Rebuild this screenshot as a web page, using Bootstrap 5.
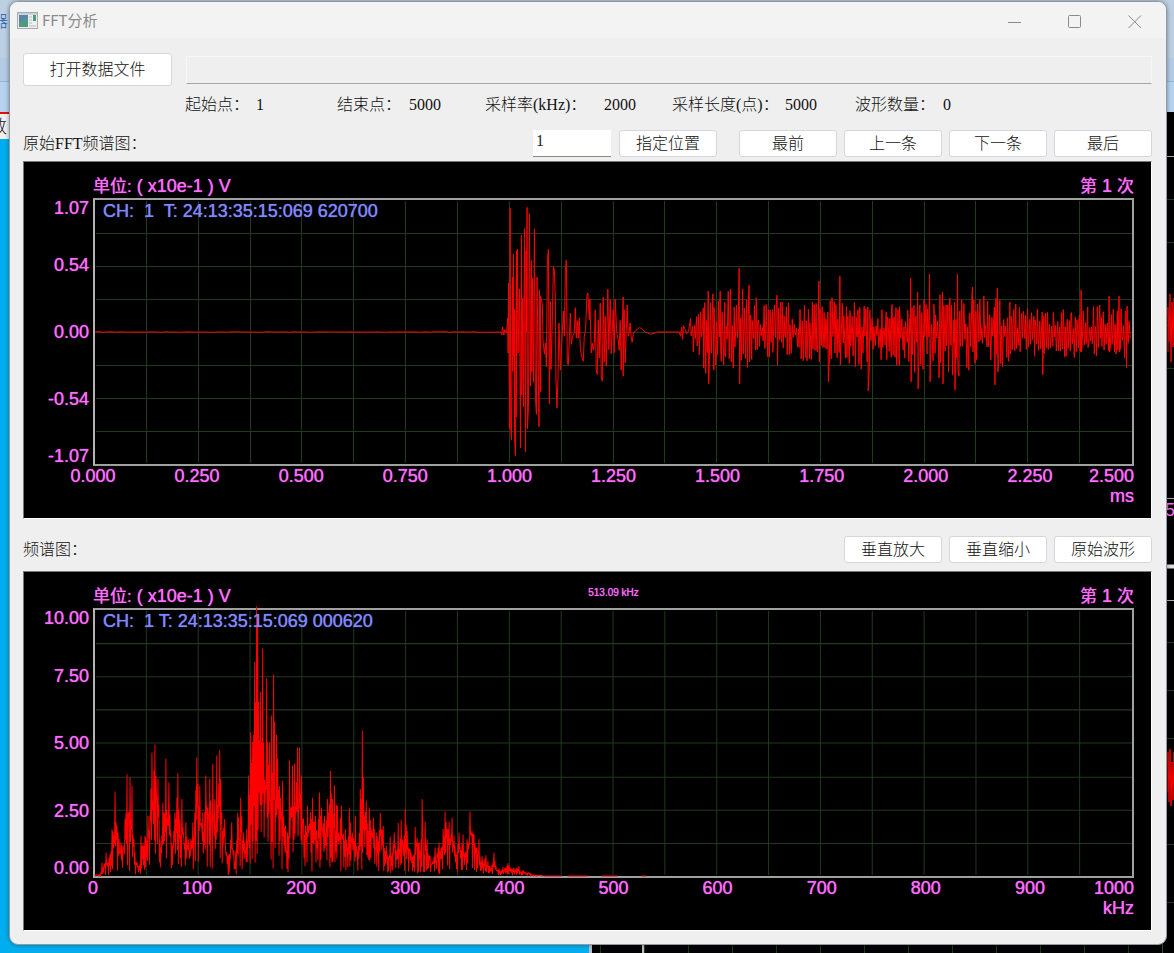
<!DOCTYPE html>
<html lang="zh-CN">
<head>
<meta charset="utf-8">
<meta name="viewport" content="width=device-width, initial-scale=1">
<title>FFT分析</title>
<link rel="stylesheet" href="https://cdn.jsdelivr.net/npm/bootstrap@5.3.0/dist/css/bootstrap.min.css">
<style>
  body { font-family: "Liberation Serif", "Noto Sans CJK SC", serif; font-size: 16px; font-weight: 300; line-height: 24px; color: #111; background: #00aeef; }
  .stage { min-height: 100vh; padding: 1px 7px 8px 9px; }

  /* application behind the dialog */
  .desk { z-index: 0; }
  .desk-sky { height: 112px; background: linear-gradient(#bccfe3 0 58px, #b4cbe6 58px 81px, #8fb6dd 81px 82px, #b5d3ee 82px 100%); }
  .desk-left { flex: 590 1 0; min-width: 0; }
  .desk-right { flex: 584 1 0; min-width: 0; border-left: 3px solid #bbb; background: linear-gradient(#bbb, #bbb) 50px 0 / 2px 100% no-repeat, repeating-linear-gradient(90deg, #000 0 8px, #1f3a1f 8px 9px, #000 9px 44px); }
  .desk-tab { height: 27px; background: #f0f0f0; border-top: 2px solid #e01010; font-size: 18px; line-height: 27px; text-indent: -11px; }
  .desk-name { top: 10px; left: -8px; color: #1f5fa8; }
  .desk-scope { width: 12px; background: #000; border-left: 1px solid #345034; }
  .desk-scope svg { width: 12px; height: 841px; }

  .dialog { z-index: 1; background: #efefef; border: 1px solid #8f9aa5; border-radius: 9px; overflow: hidden; box-shadow: 0 0 4px #0006; }
  .titlebar { height: 36px; background: #f3f3f3; color: #8a8a8a; font-family: "Noto Sans CJK SC", sans-serif; font-size: 15px; font-weight: 400; padding-left: 7px; }
  .win-btn { width: 60px; height: 34px; padding: 0 2px 0 0; border: 0; background: none; color: #8a8a8a; }
  .client { padding: 15px 14px 13px 13px; }

  .tool { flex: none; width: 98px; height: 27px; padding: 0; line-height: 24px; font-size: 16px; font-weight: 300; border: 1px solid #d6d6dc; border-radius: 3px; background: #fff; color: #111; white-space: nowrap; }
  .tool-lg { width: 149px; height: 33px; }
  .path-box { width: auto; height: 28px; margin-left: 14px; border: 1px solid #f7f7f7; border-bottom-color: #a5a5a5; border-radius: 0; background: #efefef; }
  .num-box { width: 78px; height: 27px; padding: 0 3px 5px; border: 0; border-bottom: 1px solid #8c8884; border-radius: 0; background: #fff; font-size: 16px; line-height: 21px; }
  .facts { display: grid; grid-template-columns: 71fr 81fr 72fr 76fr 119fr 68fr 113fr 70fr 88fr 209fr; margin: 7px 0 13px 162px; white-space: nowrap; }
  .facts dt, .facts dd { font-weight: 300; margin: 0; }
  .tools { gap: 7px; }
  .tools-split { margin-left: 22px; }
  .spectrum-bar { margin: 17px 0 8px; }

  .scope { display: grid; grid-template-columns: 69px 1fr; padding: 0 17px 12px 0; background: #000; border: 1px solid #777; border-right-color: #fff; border-bottom-color: #fff; color: #ff6cff; font-family: "Liberation Sans", "Noto Sans CJK SC", sans-serif; font-size: 18px; font-weight: 400; line-height: 20px; text-shadow: 0 0 1px currentColor; }
  .scope-head { grid-column: 2; height: 36px; display: grid; grid-template-columns: 1fr auto 1fr; align-items: end; line-height: 22px; }
  .scope-head .cjk { font-size: 17px; }
  .peak { font-size: 10px; line-height: 30px; }
  .ylab { display: grid; grid-template-rows: 1fr 2fr 2fr 2fr 1fr; align-items: center; justify-items: end; padding-right: 4px; }
  .ylab :first-child { align-self: start; }
  .ylab :last-child { align-self: end; }
  .plot { height: 268px; border: 2px solid #a0a0a0; border-left-color: #b4b4b4; }
  .plot-tall { height: 270px; }
  .plot svg { position: absolute; inset: 0; width: 100%; height: 100%; }
  .chan { position: relative; margin: 0; padding: 1px 0 0 8px; color: #8088ff; white-space: pre; }
  .xlab { grid-column: 2; display: grid; grid-template-columns: 1fr repeat(9, 2fr) 1fr; justify-items: center; }
  .xlab span { width: 0; display: flex; justify-content: center; }
  .xlab span:first-child { justify-self: start; }
  .xlab span:last-child { justify-self: end; justify-content: end; }
  .unit { grid-column: 2; text-align: right; }
</style>
</head>
<body>
<div class="stage position-relative d-flex flex-column">
  <div class="desk position-absolute top-0 start-0 w-100 h-100 overflow-hidden d-flex flex-column" aria-hidden="true">
    <div class="desk-sky"></div>
    <span class="desk-name position-absolute">器</span>
    <div class="flex-grow-1 d-flex">
      <div class="desk-left"><div class="desk-tab">数</div></div>
      <div class="desk-right d-flex justify-content-end">
        <div class="desk-scope">
          <svg viewBox="0 0 12 841">
            <path d="M0 44.500H12M0 386.500H12M0 488.500H12" stroke="#aaa"/>
            <path d="M0 454.500H12" stroke="#ddd" stroke-width="4"/>
            <path d="M0 87.500H12M0 130.500H12M0 213.500H12M0 256.500H12M0 530.500H12M0 578.500H12M0 626.500H12M0 732.500H12M0 790.500H12" stroke="#1f3a1f"/>
            <path d="M5 240V195L6 230L7 182L8 250L9 190L10 235L11 186L12 258M5 680V640L6 690L7 637L8 694L9 650L10 688L11 640L12 694" fill="none" stroke="#f00"/>
            <text x="2" y="404" fill="#ff6cff" font-family="Liberation Sans" font-size="18">5</text>
          </svg>
        </div>
      </div>
    </div>
  </div>

  <main class="dialog position-relative flex-grow-1">
    <header class="titlebar d-flex align-items-center">
      <svg class="me-1" width="21" height="17" viewBox="0 0 21 17" aria-hidden="true">
        <rect x=".5" y=".5" width="20" height="16" fill="#eee" stroke="#aaa"/>
        <rect x="1" y="1" width="19" height="2" fill="#c9d2da"/>
        <rect x="2" y="3" width="9" height="12" fill="#4f9a80"/>
        <path d="M2 3H11V6L2 10Z" fill="#5b85a8"/>
        <path d="M12 5H15M12 8H15M12 11H15M12 14H19" stroke="#bbb"/>
        <rect x="16" y="3" width="3" height="6" fill="#4f9a80"/>
      </svg>
      <span>FFT分析</span>
      <div class="ms-auto d-flex">
        <button type="button" class="win-btn" aria-label="最小化"><svg width="14" height="14" viewBox="0 0 14 14"><path d="M0 7.500H13" stroke="currentColor"/></svg></button>
        <button type="button" class="win-btn" aria-label="最大化"><svg width="14" height="14" viewBox="0 0 14 14"><rect x=".5" y=".5" width="12" height="12" rx="1" fill="none" stroke="currentColor"/></svg></button>
        <button type="button" class="win-btn" aria-label="关闭"><svg width="14" height="14" viewBox="0 0 14 14"><path d="M.5.500L13 13M13 .5L.5 13" stroke="currentColor"/></svg></button>
      </div>
    </header>

    <div class="client">
      <div class="d-flex align-items-center">
        <button type="button" class="btn tool tool-lg">打开数据文件</button>
        <input type="text" class="form-control path-box flex-grow-1" aria-label="数据文件路径" readonly>
      </div>
      <dl class="facts">
        <dt>起始点：</dt><dd>1</dd>
        <dt>结束点：</dt><dd>5000</dd>
        <dt>采样率(kHz)：</dt><dd>2000</dd>
        <dt>采样长度(点)：</dt><dd>5000</dd>
        <dt>波形数量：</dt><dd>0</dd>
      </dl>

      <div class="d-flex align-items-center mb-1">
        <label for="pos" class="me-auto">原始FFT频谱图：</label>
        <input id="pos" type="text" class="form-control num-box me-2" value="1">
        <button type="button" class="btn tool">指定位置</button>
        <div class="d-flex tools tools-split">
          <button type="button" class="btn tool">最前</button>
          <button type="button" class="btn tool">上一条</button>
          <button type="button" class="btn tool">下一条</button>
          <button type="button" class="btn tool">最后</button>
        </div>
      </div>

      <section class="scope" aria-label="原始波形">
        <div class="scope-head"><span><span class="cjk">单位:</span> ( x10e-1 ) V</span><span></span><span class="text-end"><span class="cjk">第</span> 1 <span class="cjk">次</span></span></div>
        <div class="ylab"><span>1.07</span><span>0.54</span><span>0.00</span><span>-0.54</span><span>-1.07</span></div>
        <div class="plot position-relative">
          <svg viewBox="0 0 1040 265" preserveAspectRatio="none"><path class="grid-lines" fill="none" stroke="#203a1c" shape-rendering="crispEdges"/><path id="wave" fill="none" stroke="#f00"/></svg>
          <p class="chan">CH:  1  T: 24:13:35:15:069 620700</p>
        </div>
        <div class="xlab"><span>0.000</span><span>0.250</span><span>0.500</span><span>0.750</span><span>1.000</span><span>1.250</span><span>1.500</span><span>1.750</span><span>2.000</span><span>2.250</span><span>2.500</span></div>
        <div class="unit">ms</div>
      </section>

      <div class="d-flex align-items-center spectrum-bar">
        <span class="me-auto">频谱图：</span>
        <div class="d-flex tools">
          <button type="button" class="btn tool">垂直放大</button>
          <button type="button" class="btn tool">垂直缩小</button>
          <button type="button" class="btn tool">原始波形</button>
        </div>
      </div>

      <section class="scope" aria-label="频谱">
        <div class="scope-head"><span><span class="cjk">单位:</span> ( x10e-1 ) V</span><span class="peak">513.09 kHz</span><span class="text-end"><span class="cjk">第</span> 1 <span class="cjk">次</span></span></div>
        <div class="ylab"><span>10.00</span><span>7.50</span><span>5.00</span><span>2.50</span><span>0.00</span></div>
        <div class="plot plot-tall position-relative">
          <svg viewBox="0 0 1040 265" preserveAspectRatio="none" class="overflow-visible"><path class="grid-lines" fill="none" stroke="#203a1c" shape-rendering="crispEdges"/><path id="spec" fill="none" stroke="#f00"/></svg>
          <p class="chan">CH:  1 T: 24:13:35:15:069 000620</p>
        </div>
        <div class="xlab"><span>0</span><span>100</span><span>200</span><span>300</span><span>400</span><span>500</span><span>600</span><span>700</span><span>800</span><span>900</span><span>1000</span></div>
        <div class="unit">kHz</div>
      </section>
    </div>
  </main>
</div>

<script src="https://cdn.jsdelivr.net/npm/bootstrap@5.3.0/dist/js/bootstrap.bundle.min.js"></script>
<script>
  // repeatable noise between 0 and 1
  let seed = 7;
  const rnd = () => (seed = (seed * 16807) % 2147483647) / 2147483647;
  const pairs = s => s.trim().split(/\s+/).map(p => p.split(',').map(Number));
  const lerp = (k, x, i) => {
    let n = 1;
    while (n < k.length - 1 && k[n][0] < x) n++;
    const a = k[n - 1], b = k[n];
    return a[i] + (b[i] - a[i]) * Math.min(1, Math.max(0, (x - a[0]) / (b[0] - a[0])));
  };

  // 20 by 8 divisions
  let grid = '';
  for (let i = 1; i < 20; i++) grid += `M${i * 52 - .5} 1V264`;
  for (let i = 1; i < 8; i++) grid += `M1 ${Math.round(i * 33.12) + .5}H1040`;
  document.querySelectorAll('.grid-lines').forEach(p => p.setAttribute('d', grid));

  // time signal: first burst as sampled points (thirds of a unit), later echo as noise in an envelope
  const burst = pairs(`62,427 66,435 68,412 72,436 75,420 80,430 84,384 85,490 86,280 88,535 90,718 91,55 93,715 95,752 98,262 99,545 101,192
    102,500 104,358 104,737 107,800 110,182 109,683 113,178 115,490 119,297 121,570 122,776 125,136 126,617 129,325 131,652 134,116 137,788 139,184
    140,427 142,52 143,718 146,655 149,70 152,590 155,212 156,548 158,265 161,578 164,116 167,625 170,675 172,262 176,574 178,712 179,300 183,607
    182,318 188,345 190,455 194,494 197,460 200,532 203,210 206,178 209,643 212,334 214,540 218,388 221,230 224,240 227,330 229,568 232,656
    235,570 238,400 242,542 246,470 251,364 254,440 257,240 260,210 263,520 266,526 272,370 275,464 279,440 284,430 287,354 290,445 293,393
    296,445 299,384 302,476 306,500 311,515 314,440 318,420 322,318 325,310 329,390 331,328 335,490 338,460 341,482 344,465 347,360 350,540
    353,555 356,390 359,505 362,340 365,560 368,575 371,322 374,518 377,380 380,530 385,298 388,480 392,330 395,492 401,360 404,490 407,328
    412,430 416,450 419,482 422,392 425,542 428,430 431,322 431,560 434,360 437,520 443,346 446,440 449,430 452,400 455,440 458,458 462,430
    468,424 474,418 480,414 486,416 492,421 498,428 505,430 514,434 524,431 535,427 600,427 604,440 607,412 610,449 613,408 618,420 622,432 628,424`);
  d = 'M0 132.500';
  for (let x = 4; x < 404; x += 4) d += `L${x} ${132.5 + (rnd() - .5) * .6}`;
  for (const [x, y] of burst) d += `L${(386 + x / 3).toFixed(1)} ${(132.5 + (y - 427) / 3).toFixed(1)}`;
  const env = pairs(`596,16,20 604,24,36 615,38,46 625,40,40 646,46,36 665,38,36 685,32,30 705,28,32 727,38,34 745,34,36 765,32,42 790,26,30
    815,36,40 835,40,48 865,38,46 900,36,42 925,28,30 950,22,26 980,24,26 1010,28,24 1038,30,28`);
  const spikes = { 610:[24,36], 615:[41,52], 627:[41,20], 646:[64,52], 656:[47,30], 684:[37,33], 726:[51,30], 747:[56,33], 735:[20,50],
    775:[25,59], 818:[54,50], 825:[40,57], 837:[58,50], 850:[40,52], 862:[30,58], 865:[58,40], 880:[45,20], 902:[25,53], 905:[44,40],
    950:[20,43], 989:[42,20], 1017:[36,20], 1027:[36,20], 1034:[20,36] };
  for (let x = 597; x < 1039; x++) {
    const s = spikes[x];
    const side = x % 2 ? 1 : 2;
    const y = lerp(env, x, side) * (.1 + .9 * rnd()) * (side === 1 ? -1 : 1);
    d += s ? `L${x} ${132.5 - s[0]}L${x + .5} ${132.5 + s[1]}` : `L${(x + rnd() * .6).toFixed(1)} ${(132.5 + y).toFixed(1)}`;
    if (!s && rnd() < .3) d += `L${x + .8} ${(132.5 - y * rnd()).toFixed(1)}`;
  }
  document.getElementById('wave').setAttribute('d', d);

  // spectrum: peak list (thirds of a unit), filled in with noise between the peaks
  const peaks = pairs(`45,826 60,826 68,790 80,760 90,765 98,690 106,577 115,700 125,730 135,660 142,526 150,535 158,560 165,760 178,800 185,710
    195,710 205,650 217,462 227,437 236,540 242,720 250,610 259,480 267,550 275,700 285,640 294,522 300,660 308,600 318,670 328,720 340,670 352,476
    360,560 370,640 380,530 390,540 401,495 406,600 412,470 421,454 428,640 436,660 445,770 458,670 465,790 475,640 484,596 492,700 503,690 508,530
    515,400 526,190 529,310 532,24 535,85 539,310 544,280 547,430 550,150 553,430 562,240 566,430 570,430 578,350 584,228 587,370 593,408 600,560 611,545 618,680 625,700 632,484 640,500
    647,494 656,446 662,446 668,530 674,660 686,620 699,596 710,650 722,580 735,650 746,600 754,516 760,600 767,558 776,620 787,620 798,690 811,626
    820,700 828,650 838,740 843,570 846,600 849,395 852,600 854,535 861,605 870,625 882,655 892,700 905,642 914,680 923,740 935,712 945,700 959,672 968,662
    975,710 980,630 986,695 995,750 1010,684 1020,730 1027,720 1031,600 1034,720 1038,668 1045,720 1055,770 1069,745 1080,730 1092,690 1100,637 1110,668 1121,655 1130,740 1140,700
    1154,705 1165,720 1175,637 1187,705 1201,720 1210,770 1222,768 1235,800 1247,760 1252,800 1272,803 1288,792 1305,805 1320,800 1332,812 1350,820
    1365,827 1420,829`).map(([x, y]) => [(x - 45) / 3, (830 - y) / 3]);
  d = 'M0 265';
  let k = 0;
  for (let x = 0; x < 450; x++) {
    let h = lerp(peaks, x, 1), hit = false;
    while (k < peaks.length && peaks[k][0] < x + 1) { h = hit ? Math.max(h, peaks[k][1]) : peaks[k][1]; hit = true; k++; }
    const hi = hit ? h : h * (.5 + .4 * rnd());
    const lo = Math.min(h, 140) * (.05 + .6 * rnd());
    d += `L${x + .1} ${(265 - hi).toFixed(1)}L${x + .6} ${(265 - lo).toFixed(1)}`;
  }
  d += 'M450 265H468M474 265H494M508 265H524M548 265H553';
  document.getElementById('spec').setAttribute('d', d);
</script>
</body>
</html>
